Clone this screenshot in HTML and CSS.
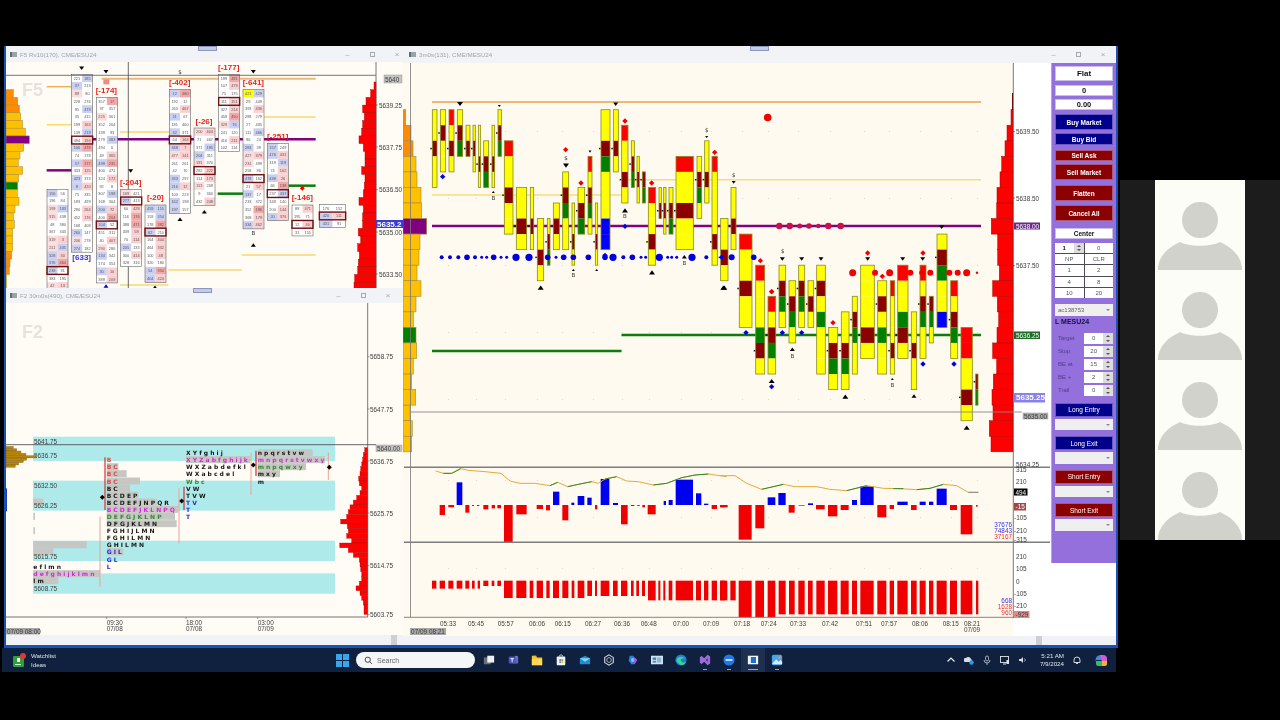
FILE: index.html
```html
<!DOCTYPE html>
<html lang="en">
<head>
<meta charset="utf-8">
<title>Trading charts</title>
<link rel="stylesheet" href="styles.css">
</head>
<body>
<div class="screen">
  <div class="desktop">
    <div class="wins">
      <section class="win win-f5">
        <header class="title"><i class="app"></i><span>F5 Rv10(170), CME/ESU24</span><b class="grip"></b><em class="ctl">&#8211;</em><em class="ctl box"></em><em class="ctl">&#215;</em></header>
        <svg id="f5" class="chart" viewBox="6 62 397 226"></svg>
      </section>
      <section class="win win-f2">
        <header class="title"><i class="app"></i><span>F2 30m0s(490), CME/ESU24</span><b class="grip"></b><em class="ctl">&#8211;</em><em class="ctl box"></em><em class="ctl">&#215;</em></header>
        <svg id="f2" class="chart" viewBox="6 303 397 332"></svg>
        <div class="scroll"><u></u></div>
      </section>
      <section class="win win-main">
        <header class="title"><i class="app"></i><span>3m0s(131), CME/MESU24</span><b class="grip"></b><em class="ctl">&#8211;</em><em class="ctl box"></em><em class="ctl">&#215;</em></header>
        <div class="main-body">
          <svg id="main" class="chart" viewBox="403 63 648 573"></svg>
          <div class="side">
            <aside class="panel">
              <div class="b wh h15 lg">Flat</div>
              <div class="b wh h11 m4 md">0</div>
              <div class="b wh h11 m3 md">0.00</div>
              <div class="b navy h16 m4">Buy Market</div>
              <div class="b navy h12 m3">Buy Bid</div>
              <div class="b maroon h11 m5">Sell Ask</div>
              <div class="b maroon h16 m3">Sell Market</div>
              <div class="b maroon h16 m5">Flatten</div>
              <div class="b maroon h16 m4">Cancel All</div>
              <div class="b wh h11 m7">Center</div>
              <div class="qty m4">
                <div class="q q1">1<s class="spin"></s></div><div class="q">0</div>
                <div class="q">NP</div><div class="q">CLR</div>
                <div class="q">1</div><div class="q">2</div>
                <div class="q">4</div><div class="q">8</div>
                <div class="q">10</div><div class="q">20</div>
              </div>
              <div class="sel m6">ac138753</div>
              <div class="sym">L MESU24</div>
              <div class="params">
                <div class="prm"><label>Target</label><span>0</span><s class="spin"></s></div>
                <div class="prm"><label>Stop</label><span>20</span><s class="spin"></s></div>
                <div class="prm"><label>BE at</label><span>15</span><s class="spin"></s></div>
                <div class="prm"><label>BE +</label><span>2</span><s class="spin"></s></div>
                <div class="prm"><label>Trail</label><span>0</span><s class="spin"></s></div>
              </div>
              <div class="n navy m7">Long Entry</div><div class="sel m2"></div>
              <div class="n navy m6">Long Exit</div><div class="sel m2"></div>
              <div class="n maroon m6">Short Entry</div><div class="sel m2"></div>
              <div class="n maroon m6">Short Exit</div><div class="sel m2"></div>
            </aside>
          </div>
        </div>
        <div class="scroll main-scroll"><u></u></div>
      </section>
    </div>
    <footer class="taskbar">
      <div class="watch">
        <svg class="wicon" viewBox="0 0 14 14"><rect y="3" width="11" height="11" rx="1" fill="#2e9e3a"/><path d="M4 5h3v4H4z" fill="#fff"/><rect x="2" y="11" width="6" height="1" fill="#cfc"/><circle cx="10" cy="3" r="3" fill="#d93a32"/></svg>
        <div class="wtext"><span>Watchlist</span><span>Ideas</span></div>
      </div>
      <div class="tb-ic start"><svg viewBox="0 0 14 14"><path fill="#35a7ee" d="M0 0h6.500v6.500H0zM7.500 0H14v6.500H7.500zM0 7.500h6.500V14H0zM7.500 7.500H14V14H7.500z"/></svg></div>
      <div class="search"><svg viewBox="0 0 12 12"><circle cx="5" cy="5" r="3.500" fill="none" stroke="#333" stroke-width="1.200"/><path d="M7.500 7.500l3 3" stroke="#333" stroke-width="1.200"/></svg><span>Search</span></div>
      <div class="tb-ic"><svg viewBox="0 0 14 14"><rect x="1" y="4" width="8" height="8" fill="#6b7077"/><rect x="5" y="2" width="8" height="8" fill="#eef0f2"/></svg></div>
      <div class="tb-ic"><svg viewBox="0 0 14 14"><circle cx="11" cy="4" r="2" fill="#7b83d6"/><rect x="6" y="4" width="7" height="7" rx="1" fill="#6269c4"/><rect x="2" y="3" width="8" height="8" rx="1" fill="#4b53bc"/><path d="M4 5h4v1H6.500v3.500h-1V6H4z" fill="#fff"/></svg></div>
      <div class="tb-ic"><svg viewBox="0 0 14 14"><path d="M1 2h5l1 2h6v9H1z" fill="#f6c62f"/><rect x="1" y="6" width="12" height="7" fill="#ffd95a"/><rect x="3" y="2" width="3" height="1" fill="#e5a50f"/></svg></div>
      <div class="tb-ic"><svg viewBox="0 0 14 14"><rect x="2" y="3" width="10" height="10" rx="1" fill="#eef3f8"/><path d="M5 3a2 2 0 0 1 4 0" fill="none" stroke="#cde"/><rect x="5" y="6" width="2" height="2" fill="#e44"/><rect x="7.500" y="6" width="2" height="2" fill="#4b4"/><rect x="5" y="8.500" width="2" height="2" fill="#39e"/><rect x="7.500" y="8.500" width="2" height="2" fill="#fb0"/></svg></div>
      <div class="tb-ic"><svg viewBox="0 0 14 14"><path d="M1 5l6-3 6 3v7H1z" fill="#1a8fd1"/><path d="M1 5l6 4 6-4" fill="#8fd6f4"/></svg></div>
      <div class="tb-ic"><svg viewBox="0 0 14 14"><path d="M7 1l5 3v6l-5 3-5-3V4z" fill="none" stroke="#dfe4ea" stroke-width="1.200"/><path d="M7 4l2.500 1.500v3L7 10 4.500 8.500v-3z" fill="none" stroke="#dfe4ea" stroke-width=".8"/></svg></div>
      <div class="tb-ic"><svg viewBox="0 0 14 14"><path d="M3 2h4l4 4-2 6H5L2 8z" fill="#2b7de0"/><path d="M9 4l3 3-3 5-2-5z" fill="#9a5be0"/><path d="M5 5h3v4H5z" fill="#7ad3f4"/></svg></div>
      <div class="tb-ic"><svg viewBox="0 0 14 14"><rect x="0" y="2" width="14" height="10" fill="#cfe4f3"/><rect x="2" y="4" width="4" height="3" fill="#3c87c9"/><rect x="7" y="4" width="5" height="6" fill="#8fb8d8"/><rect x="2" y="8" width="4" height="2" fill="#5d7fa3"/></svg></div>
      <div class="tb-ic"><svg viewBox="0 0 14 14"><circle cx="7" cy="7" r="6.500" fill="#1b7fce"/><path d="M2 9a5 4 0 0 1 10-3c-2-2-6-1-5 2 1 3 5 2 6 1-1 3-4 4.500-7 3.500" fill="#3ccf9a"/></svg></div>
      <div class="tb-ic"><svg viewBox="0 0 14 14"><path d="M3 2l3 3 4-4 3 2v8l-3 2-4-4-3 3-2-2V4z" fill="#9d6ad9"/><path d="M10 5v4L8 7z" fill="#1c2a4a"/></svg><i class="dash"></i></div>
      <div class="tb-ic"><svg viewBox="0 0 14 14"><circle cx="7" cy="7" r="6.500" fill="#1f78e8"/><rect x="3" y="6" width="8" height="2" fill="#dbe9ff"/></svg><i class="dash"></i></div>
      <div class="tb-ic active"><svg viewBox="0 0 14 14"><rect x="1" y="2" width="12" height="10" fill="#f2f4f7"/><rect x="4.500" y="3.500" width="6" height="7" fill="#1673d6"/></svg><i class="dash on"></i></div>
      <div class="tb-ic"><svg viewBox="0 0 14 14"><rect x="1" y="1" width="12" height="12" rx="2" fill="#4aa3e8"/><path d="M1 12l5-6 3 3 2-2 2 2v3H1z" fill="#d9ecfb"/><circle cx="10" cy="4" r="1.500" fill="#f28a5a"/></svg><i class="dash"></i></div>
      <div class="tray">
        <svg class="t-i" viewBox="0 0 10 10"><path d="M1.500 6.500L5 3l3.500 3.500" fill="none" stroke="#e8ecf2" stroke-width="1.200"/></svg>
        <svg class="t-i" viewBox="0 0 10 10"><path d="M1 7a2 2 0 0 1 1-4 3 3 0 0 1 5 1 2 2 0 0 1 0 3z" fill="#d7dde5"/><circle cx="7.500" cy="7.500" r="2.200" fill="#2b9de8"/></svg>
        <svg class="t-i" viewBox="0 0 10 10"><rect x="3.500" y="1" width="3" height="5" rx="1.500" fill="none" stroke="#c8ced6" stroke-width=".8"/><path d="M2 5a3 3 0 0 0 6 0M5 8v2" fill="none" stroke="#c8ced6" stroke-width=".8"/></svg>
        <svg class="t-i" viewBox="0 0 10 10"><rect x=".5" y="1.500" width="8" height="6" fill="none" stroke="#dfe4ea" stroke-width=".9"/><path d="M3 9h3" stroke="#dfe4ea"/><rect x="6.500" y="5" width="2.500" height="4" fill="#dfe4ea"/></svg>
        <svg class="t-i sp" viewBox="0 0 10 10"><path d="M1 4h2l2-2v6L3 6H1z" fill="#d7dde5"/><path d="M6.500 3.500a2 2 0 0 1 0 3" fill="none" stroke="#d7dde5" stroke-width=".7"/></svg>
        <div class="clock"><span>5:21 AM</span><span>7/9/2024</span></div>
        <svg class="t-i" viewBox="0 0 10 10"><path d="M2 7.500V5a3 3 0 0 1 6 0v2.500zM4 8.500h2" fill="none" stroke="#e4e8ee" stroke-width=".9"/></svg>
        <svg class="t-l" viewBox="0 0 14 14"><path d="M2 9a5 5 0 0 1 5-7h2v5H2z" fill="#3f8ae0"/><path d="M6 2h3a4 4 0 0 1 4 4v3H8z" fill="#d85ad0"/><path d="M2 8h6v5H4a2 2 0 0 1-2-2z" fill="#39b86c"/><path d="M8 8h5v3a2 2 0 0 1-2 2H8z" fill="#f0b429"/></svg>
      </div>
    </footer>
  </div>
  <div class="people">
    <div class="cards">
      <svg class="person" viewBox="0 0 90 90"><circle cx="45" cy="40" r="18"/><path d="M3 90C3 77 12 68 25 62c10 5 30 5 40 0 13 6 22 15 22 28z"/></svg>
      <svg class="person" viewBox="0 0 90 90"><circle cx="45" cy="40" r="18"/><path d="M3 90C3 77 12 68 25 62c10 5 30 5 40 0 13 6 22 15 22 28z"/></svg>
      <svg class="person" viewBox="0 0 90 90"><circle cx="45" cy="40" r="18"/><path d="M3 90C3 77 12 68 25 62c10 5 30 5 40 0 13 6 22 15 22 28z"/></svg>
      <svg class="person" viewBox="0 0 90 90"><circle cx="45" cy="40" r="18"/><path d="M3 90C3 77 12 68 25 62c10 5 30 5 40 0 13 6 22 15 22 28z"/></svg>
    </div>
  </div>
</div>
<script src="app.js"></script>
</body>
</html>
```
FILE: styles.css
```css
* { box-sizing: border-box; }
html, body { margin: 0; padding: 0; background: #000; overflow: hidden; }
body { font-family: "Liberation Sans", Arial, sans-serif; }
.screen { display: flex; width: 1280px; height: 720px; background: #000; filter: blur(.45px); }
.desktop { width: 1120px; padding-top: 46px; flex: none; }
.wins { position: relative; margin-left: 4px; width: 1114px; height: 602px; background: #1653b4; }
.win { position: absolute; display: flex; flex-direction: column; background: #fffcf6; overflow: hidden; }
.win-f5 { left: 2px; top: 0; width: 397px; height: 242px; }
.win-f2 { left: 2px; top: 242px; width: 397px; height: 357px; }
.win-main { left: 399px; top: 0; width: 713px; height: 599px; background: #fff; }
.title { position: relative; display: flex; align-items: center; height: 16px; flex: none; background: #f1f3f6; padding-left: 4px; color: #a0a4aa; font-size: 6.200px; }
.win-f2 .title { height: 15px; padding-right: 9px; }
.win-main .title { height: 17px; padding-left: 6px; padding-right: 7px; }
.app { width: 7px; height: 5px; margin-right: 3px; background: #9aa4a6; border-left: 2px solid #5a7072; }
.grip { position: absolute; left: 192px; top: 0; width: 19px; height: 5px; background: #c5cbe3; border: 1px solid #8d96bd; }
.win-f2 .grip { left: 187px; }
.win-main .grip { left: 347px; }
.ctl { width: 12px; text-align: center; font-style: normal; font-size: 8px; color: #a6aab0; }
.title span { flex: 1; }
.box { position: relative; height: 5px; width: 5px; margin: 0 16.500px 0 16px; border: .7px solid #a6aab0; }
.chart { display: block; flex: none; }
#f5 { width: 397px; height: 226px; background: #fffcf6; }
#f2 { width: 397px; height: 332px; background: #fffcf6; }
#main { width: 648px; height: 573px; background: #fff; }
.main-body { display: flex; height: 573px; flex: none; }
.side { width: 65px; background: #fff; }
.panel { display: flex; flex-direction: column; height: 500px; padding: 3px 3px 0 3px; background: #9370db; border-left: 1px solid #b6a3e6; font-size: 6.500px; }
.scroll { position: relative; height: 10px; background: #f0f2f5; flex: none; }
.scroll u { position: absolute; right: 6px; top: 0; width: 6px; height: 10px; background: #ccd0d4; }
.main-scroll u { right: 74px; }
.b { display: flex; align-items: center; justify-content: center; font-weight: 700; flex: none; }
.n { display: flex; align-items: center; justify-content: center; height: 14px; flex: none; }
.lg { font-size: 8px; }
.md { font-size: 7.500px; }
.wh { background: #fff; color: #111; border: 1px solid #c9bdea; }
.navy { background: #00008b; color: #fff; border: 1px solid #6a5ac0; }
.maroon { background: #8b0000; color: #fff; border: 1px solid #a8587c; }
.h11 { height: 11px; } .h12 { height: 12px; } .h15 { height: 15px; } .h16 { height: 16px; }
.m2 { margin-top: 2px; } .m3 { margin-top: 3px; } .m4 { margin-top: 4px; } .m5 { margin-top: 5px; } .m6 { margin-top: 6px; } .m7 { margin-top: 7px; }
.qty { display: grid; grid-template-columns: 1fr 1fr; gap: 1px; background: #4c4a58; flex: none; height: 55px; color: #555; }
.q { position: relative; display: flex; align-items: center; justify-content: center; background: #fff; font-size: 6px; }
.q1 { color: #111; font-weight: 700; padding-right: 10px; }
.q1 .spin { position: absolute; right: 0; top: 0; bottom: 0; height: auto; }
.spin { position: relative; display: block; width: 10px; height: 11px; background: #dcdcdc; flex: none; }
.spin::before, .spin::after { content: ""; position: absolute; left: 3px; border-left: 2px solid transparent; border-right: 2px solid transparent; }
.spin::before { top: 2px; border-bottom: 2px solid #555; }
.spin::after { bottom: 2px; border-top: 2px solid #555; }
.sel { position: relative; display: flex; align-items: center; height: 11.500px; flex: none; padding-left: 3px; background: #efefef; color: #666; font-size: 6px; }
.sel::after { content: ""; position: absolute; right: 3px; top: 5px; border-left: 2px solid transparent; border-right: 2px solid transparent; border-top: 2px solid #888; }
.sym { margin-top: 1px; height: 10px; line-height: 10px; font-weight: 700; font-size: 7px; color: #11114a; flex: none; }
.params { display: flex; flex-direction: column; gap: 2px; margin-top: 6px; flex: none; }
.prm { display: flex; height: 11px; align-items: center; }
.prm label { width: 30px; padding-left: 3px; color: #4f3f8a; font-size: 6px; }
.prm span { width: 19px; height: 11px; line-height: 11px; text-align: center; background: #fff; color: #555; font-size: 6px; }
.taskbar { display: flex; align-items: center; height: 24px; margin-left: 2px; width: 1114px; background: #10203f; color: #dfe5ee; }
.watch { display: flex; align-items: center; width: 328px; padding-left: 11px; }
.wicon { width: 14px; height: 14px; margin-right: 4px; }
.wtext { display: flex; flex-direction: column; font-size: 6.200px; line-height: 9px; }
.tb-ic { position: relative; display: flex; align-items: center; justify-content: center; width: 24px; height: 24px; flex: none; }
.tb-ic svg { width: 12px; height: 12px; }
.start { margin-right: 2px; }
.start svg { width: 13px; height: 13px; }
.search { display: flex; align-items: center; gap: 4px; width: 119px; height: 16px; margin-right: 2px; padding-left: 8px; border-radius: 8px; background: #f5f6f8; color: #666; font-size: 7px; flex: none; }
.search svg { width: 9px; height: 9px; }
.active { background: #1f2f50; }
.dash { position: absolute; bottom: 2px; left: 10px; width: 4px; height: 1px; background: #9aa3b2; }
.dash.on { left: 7px; width: 10px; background: #6db5f0; }
.tray { display: flex; align-items: center; margin-left: auto; padding-right: 8px; gap: 8px; }
.t-i { width: 10px; height: 10px; flex: none; }
.t-l { width: 14px; height: 14px; margin-left: 4px; flex: none; }
.sp { margin-right: 4px; }
.clock { display: flex; flex-direction: column; align-items: flex-end; font-size: 6.200px; line-height: 8px; color: #dfe5ee; }
.people { width: 160px; height: 360px; margin-top: 180px; background: #1c1c1c; display: flex; justify-content: center; flex: none; }
.cards { display: flex; flex-direction: column; width: 90px; background: #fdfdf7; }
.person { display: block; width: 90px; height: 90px; fill: #d2d2cc; }
text { dominant-baseline: central; font-family: "Liberation Sans", Arial, sans-serif; }
.ax { font-size: 6.400px; fill: #3c3c3c; }
.fp { font-size: 3.900px; fill: #5a5a5a; }
.lab { font-size: 8px; font-weight: 700; fill: #e8201c; }
.wm { font-size: 18px; font-weight: 700; fill: #e6e3dd; }
.tpo { font-family: "DejaVu Sans", sans-serif; font-size: 6px; font-weight: 700; }
.big { font-size: 8px; font-weight: 700; }
.sig { font-family: "DejaVu Sans", sans-serif; font-size: 5.500px; fill: #333; }
.w { fill: #fff; }
.cb { fill: #3232e0; }
.cr { fill: #f03030; }
```
FILE: app.js
```js
var R=function(x,y,w,h,f,s,sw){return '<rect x="'+x+'" y="'+y+'" width="'+w+'" height="'+h+'" fill="'+f+'"'+(s?' stroke="'+s+'" stroke-width="'+(sw||.7)+'"':'')+'/>';};
var L=function(a,b,c,d,col,w){return '<line x1="'+a+'" y1="'+b+'" x2="'+c+'" y2="'+d+'" stroke="'+col+'" stroke-width="'+(w||1)+'"/>';};
var T=function(x,y,t,cl,anc,fill){return '<text x="'+x+'" y="'+y+'" class="'+cl+'"'+(anc?' text-anchor="'+anc+'"':'')+(fill?' fill="'+fill+'"':'')+'>'+t+'</text>';};
var C=function(x,y,r,f){return '<circle cx="'+x+'" cy="'+y+'" r="'+r+'" fill="'+f+'"/>';};
var P=function(p,f){return '<polygon points="'+p+'" fill="'+f+'"/>';};
var Up=function(x,y,s,f){return P((x-s)+','+(y+s*.7)+' '+(x+s)+','+(y+s*.7)+' '+x+','+(y-s*.7),f||'#000');};
var Dn=function(x,y,s,f){return P((x-s)+','+(y-s*.7)+' '+(x+s)+','+(y-s*.7)+' '+x+','+(y+s*.7),f||'#000');};
var D=function(x,y,s,f){return P((x-s)+','+y+' '+x+','+(y-s)+' '+(x+s)+','+y+' '+x+','+(y+s),f);};
var Poly=function(pts,col,w){return '<polyline points="'+pts.join(' ')+'" fill="none" stroke="'+col+'" stroke-width="'+(w||1)+'"/>';};
var rnd=(function(){var s=12345;return function(n){s=(s*1103515245+12345)&0x7fffffff;return (s>>8)%n;};})();

/* ---------- main chart ---------- */
(function(){
  var o='',ry=function(n){return 109.7+15.55*n;};
  var X=function(z){return 405+z/3;},X2=function(z){return 720+z/3;},Y9=function(z){return 455+z/3;};
  o+=R(403,63,610,573,'#fffaf0');
  var dx=[448,476,505,537,562,593,622,649,681,711,742,768,798,830,864,889,920,951,977];
  [131,198,265,332,399,480,517,568].forEach(function(y){dx.forEach(function(x){o+=R(x,y,1,1,'#ded9cc');});});
  var gold='#ffc000',or='#ff8c00';
  var lp=[405.7,411,413,416,417,421,421.7,426.7,420,419,417,421,416,413.3,416,416.7,413.3,411.7,415.7,410,412.3,411.7];
  lp.forEach(function(r,n){var c=n<3?or:gold;if(n==7)c='#800080';if(n==14)c='#008000';o+=R(403,ry(n),r-403,15.55,c,'#a58a3a',.6);});
  var rp=[1011,1007,1005,1001.7,1000,997,996.7,991.3,997.7,997.7,999.3,992.7,997.3,998.7,997,992.7,996.7,993.3,992,993,989.3,991];
  rp.forEach(function(l,n){o+=R(l,ry(n),1013-l,15.55,'#ff0000','#b00000',.5);});
  o+=R(1012,93,1,17,'#600');
  o+=L(432,102,981,102,'#f0b878',2);
  o+=L(432,195,621.5,195,'#f8dc80',1.5)+L(621.5,179.7,981,179.7,'#f8dc80',1.5);
  o+=L(432,226,981,226,'#800080',2.5);
  o+=L(432,351,621.5,351,'#0b7d0b',2.5)+L(621.5,335,981,335,'#0b7d0b',2.5);
  var cs=[[82,96,0,'yydyy'],[106,122,0,'ydyy'],[132,147,0,'rydy'],[157,173,0,'ydg'],[183,195,1,'yd'],[204,211,1,'ydy'],[220,227,1,'yydy'],[236,251,2,'ydg'],[261,269,1,'yydy'],[279,289,0,'ydg'],[298,324,2,'ryydyy'],[334,365,5,'yydy'],[376,386,5,'yydy'],[397,416,7,'yydy'],[427,435,7,'ydg'],[445,463,6,'ydy'],[473,491,4,'ydgyy'],[501,509,6,'yydy'],[519,539,5,'ydg'],[549,561,3,'rydgy'],[571,578,6,'yydy'],[588,615,0,'yydgyyybb'],[625,640,0,'yydy'],[650,669,1,'ryydy'],[679,688,2,'ydg'],[696,703,3,'ydy'],[712,721,4,'dg'],[730,752,5,'ryydy'],[762,769,5,'yd'],[776,783,5,'ydy'],[792,804,5,'ydg'],[813,865,3,'ryydyy'],[876,890,3,'ydgy'],[899,912,2,'yydy'],[921,937,3,'ryyyydy'],[947,969,7,'yydy']].map(function(c){return [X(c[0]),X(c[1]),c[2],c[3]];});
  cs=cs.concat([[731,736,5,'yydy'],[739.3,752,8,'ryydyy'],[755.7,764.7,10,'ryyygdy'],[768,775.7,12,'rydgy'],[779,785.7,10,'ydgy'],[789,795.7,11,'ydgy'],[798.7,804.7,10,'ydgy'],[808,813.7,11,'ydy'],[816.7,825.3,10,'ydygyyy'],[828.7,837.7,14,'ydgy'],[841.3,849,13,'yydgy'],[852.3,857.3,12,'ydgyy'],[860.7,874.3,10,'yyyydy'],[877.7,886.7,11,'ydygyy'],[890.3,894.7,11,'ryyydy'],[897.7,908,10,'ryygdy'],[911.3,916.7,13,'yydyy'],[920,926,10,'rydgyy'],[929.3,933.3,12,'dgy'],[937,947,8,'ydgyyb'],[950.7,957.7,11,'rydgy'],[961,972.3,14,'rryydy'],[975.7,978,17,'dg']]);
  var col={y:'#ffff00',r:'#ff0000',d:'#8b0000',g:'#008000',b:'#0000ff'};
  cs.forEach(function(c){
    var w=c[1]-c[0],s=c[3];
    for(var i=0;i<s.length;i++) o+=R(c[0],ry(c[2]+i),w,15.55,col[s[i]]);
    o+=R(c[0],ry(c[2]),w,15.55*s.length,'none','#8a8a1a',.8);
    var k=s.indexOf('d'); if(k>=0) o+=R(c[0]-2,ry(c[2]+k)+7,1.5,1.5,'#111');
  });
  [110,135,160,186,210,230,245,266,288,305,333,372,428,453,476,505,550,600,624,655,682,708,722,763,788,800,815,861,904,950].forEach(function(z){
    var big=[333,372,624,763,861].indexOf(z)>=0,mid=[186,266,428,476,505,550,600,682].indexOf(z)>=0,t=[230,245,288,305,453,708,722,788,800,815].indexOf(z)>=0;
    o+=C(X(z),257.3,big?3.6:mid?2.8:t?1.5:2,'#0000e0');
  });
  o+=C(731.7,257.3,3,'#0000e0')+C(753.7,257.3,2.8,'#0000e0');
  [[398,3.5],[465,3],[509,3.5],[571,3],[605,2.5],[631,3],[688,3],[713,3],[740,3.5],[771,1.2]].forEach(function(a){o+=C(X2(a[0]),272.7,a[1],'#f00000');});
  [[178,3.2],[209,3.2],[239,2.5],[267,2.8],[295,2.2],[325,3.2],[362,3.2]].forEach(function(a){o+=C(X2(a[0]),226,a[1],'#c8104a');});
  o+=C(767.7,117.5,3.8,'#f00000');
  [[113,350],[660,499],[600,586]].forEach(function(a){o+=D(X(a[0]),60+a[1]/3,2.7,'#0000e0');});
  [[78,158],[187,158],[245,158],[155,320],[609,252],[702,252]].forEach(function(a){o+=D(X2(a[0]),280+a[1]/3,2.7,'#0000e0');});
  [[482,269],[528,369],[660,183],[740,369],[929,277]].forEach(function(a){o+=D(X(a[0]),60+a[1]/3,2.7,'#f00000');});
  [[121,602],[155,695],[443,579],[487,649],[609,579]].forEach(function(a){o+=D(X2(a[0]),60+a[1]/3,2.7,'#f00000');});
  o+=D(X2(339),280+128/3,2.7,'#f00000')+D(X2(155),280+35/3,2.7,'#f00000');
  [[165,132,3],[283,138,1.5],[483,317,3],[555,275,1.5],[632,133,2.5],[905,231,1.5]].forEach(function(a){o+=Dn(X(a[0]),60+a[1]/3,a[2]);});
  [[41,367,2],[187,597,2.5],[245,597,2.5],[303,597,2.5],[443,597,2.5],[548,597,2.5],[608,597,2.5],[665,502,2.5]].forEach(function(a){o+=Dn(X2(a[0]),60+a[1]/3,a[2]);});
  [[407,683,3],[265,396,1.5],[505,630,1.5],[575,630,1.5],[660,451,3],[741,637,3],[838,590,2.5],[955,683,3]].forEach(function(a){o+=Up(X(a[0]),60+a[1]/3,a[2]);});
  [[13,23,3],[155,303,3],[217,208,2.5],[376,350,3],[517,297,1.5],[582,348,2.5],[740,443,3]].forEach(function(a){o+=Up(X2(a[0]),280+a[1]/3,a[2]);});
  [[265,413],[505,645],[660,468],[838,608]].forEach(function(a){o+=T(X(a[0]),60+a[1]/3,'B','sig','middle');});
  [[217,227],[517,315]].forEach(function(a){o+=T(X2(a[0]),280+a[1]/3,'B','sig','middle');});
  [[483,293],[905,209]].forEach(function(a){o+=T(X(a[0]),60+a[1]/3,'$','sig','middle');});
  [[41,344],[188,573]].forEach(function(a){o+=T(X2(a[0]),60+a[1]/3,'$','sig','middle');});
  /* indicator */
  [[155,172,82],[444,463,110],[499,508,143],[518,538,123],[547,560,128],[587,613,72],[624,639,144],[776,783,138],[791,803,135],[812,864,74],[873,889,115],[897,910,146]].forEach(function(b){o+=R(X(b[0]),Y9(b[2]),(b[1]-b[0])/3,(150-b[2])/3,'#0000f0');});
  [[104,120,180],[130,147,157],[181,193,173],[201,207,153],[216,223,153],[235,250,163],[260,270,160],[277,288,160],[297,323,262],[334,365,178],[395,414,162],[423,435,166],[472,490,196],[570,577,163],[648,668,208],[678,688,153],[697,704,153],[712,720,157],[728,752,178],[920,936,162],[946,960,157]].forEach(function(b){o+=R(X(b[0]),Y9(150),(b[1]-b[0])/3,(b[2]-150)/3,'#f00000');});
  [[143,166,127],[175,197,114],[264,279,145],[396,411,135],[421,461,94],[532,563,140],[599,617,140],[627,640,140],[650,680,101]].forEach(function(b){o+=R(X2(b[0]),Y9(b[2]),(b[1]-b[0])/3,(150-b[2])/3,'#0000f0');});
  [[0,23,157],[56,95,254],[106,133,220],[206,224,173],[236,254,152],[288,314,163],[324,352,184],[362,386,165],[472,499,187],[509,522,162],[573,590,165],[690,711,165],[722,757,238],[768,773,155]].forEach(function(b){o+=R(X2(b[0]),Y9(150),(b[1]-b[0])/3,(b[2]-150)/3,'#f00000');});
  var pl=function(a,fx){return a.map(function(p){return fx(p[0])+','+Y9(p[1]);});};
  o+=Poly(pl([[92,48],[115,55],[140,55],[167,41],[190,46],[240,50],[288,55],[315,78],[345,85],[390,85],[435,92],[458,82],[488,95],[520,88],[560,80],[580,85],[600,72],[635,65],[665,78],[700,80],[745,90],[785,85],[830,68],[870,60],[910,57],[965,65]],X),'#e8a83a');
  o+=Poly(pl([[0,62],[45,62],[80,85],[125,103],[190,88],[225,95],[290,95],[330,103],[380,107],[440,92],[490,100],[540,101],[590,104],[630,100],[670,88],[710,92],[745,112],[775,112]],X2),'#e8a83a');
  [[[115,55],[140,55],[167,41]],[[435,92],[458,82]],[[488,95],[520,88],[560,80]],[[600,72],[635,65]],[[745,90],[785,85],[830,68],[870,60],[910,57]]].forEach(function(a){o+=Poly(pl(a,X),'#2e8b2e');});
  [[[125,103],[190,88]],[[380,107],[440,92]],[[520,101],[550,101]],[[590,104],[630,100],[670,88]]].forEach(function(a){o+=Poly(pl(a,X2),'#2e8b2e');});
  o+=Poly(pl([[745,112],[775,112]],X2),'#888');
  /* lower bars */
  [[81,94,401],[104,120,401],[130,145,401],[155,172,401],[181,193,401],[201,209,401],[218,225,401],[235,250,393],[260,268,393],[277,288,393],[297,323,429],[334,364,429],[374,385,429],[395,414,429],[424,434,429],[444,462,429],[472,490,429],[500,508,429],[518,538,429],[547,561,423],[570,576,423],[587,613,423],[624,638,423],[648,667,423],[678,686,423],[694,702,423],[711,720,423],[729,752,436],[760,766,436],[775,781,436],[791,802,436],[812,864,436],[873,888,436],[897,910,436],[920,936,436],[946,960,436]].forEach(function(b){o+=R(X(b[0]),Y9(377),(b[1]-b[0])/3,(b[2]-377)/3,'#f00000');});
  [[0,22,436],[31,47,436],[56,95,487],[106,132,487],[143,166,487],[176,197,478],[207,224,478],[235,254,478],[264,278,478],[289,314,478],[324,352,478],[362,386,478],[396,411,478],[421,461,478],[472,499,478],[509,522,478],[532,563,478],[573,590,478],[599,617,478],[627,640,478],[650,680,478],[690,711,478],[722,757,478],[768,775,478]].forEach(function(b){o+=R(X2(b[0]),Y9(377),(b[1]-b[0])/3,(b[2]-377)/3,'#f00000');});
  /* frame lines */
  o+=L(410.5,63,410.5,617,'#777',.8)+L(1013.3,63,1013.3,618,'#555',.8);
  o+=L(411,412,1022,412,'#888',.9)+L(404,467.3,1050,467.3,'#7d7d7d',1.5)+L(404,542.3,1050,542.3,'#7d7d7d',1.5)+L(404,617.3,1014,617.3,'#777',.9);
  /* time axis */
  [['05:33',448],['05:45',476],['05:57',505.7],['06:06',537],['06:15',562.7],['06:27',593],['06:36',622],['06:48',648.7],['07:00',681],['07:09',711],['07:18',742],['07:24',768.7],['07:33',798],['07:42',830],['07:51',864],['07:57',889],['08:06',920],['08:15',950.7],['08:21',972]].forEach(function(a){o+=T(a[1],623.5,a[0],'ax','middle');});
  o+=T(972,629.5,'07/09','ax','middle');
  o+=R(410,628,36,7,'#a8a8a8')+T(428,631.5,'07/09 08:21','ax','middle');
  /* price axis */
  [['5639.50',131.7],['5638.50',198],['5637.50',265.7]].forEach(function(a){o+=L(1013,a[1],1015,a[1],'#555',.7)+T(1016,a[1],a[0],'ax');});
  o+=T(1016,464.3,'5634.25','ax');
  o+=R(1014,222.5,26,7,'#6b2a8a')+T(1016,226,'5638.00','ax w');
  o+=R(1014,331.5,26,7.5,'#1f6b2a')+T(1016,335.3,'5636.25','ax w');
  o+=R(1014,393,31,9.5,'#8a82e6')+T(1016,397.8,'5635.25','big w');
  o+=R(1022.7,412.7,25.5,6.6,'#a8a8a8')+T(1024,416,'5635.00','ax');
  [['315',469],['210',481],['-105',517.7],['-210',530],['-315',539],['210',556],['105',568.7],['0',581],['-105',593],['-210',605]].forEach(function(a){o+=T(a[0][0]=='-'?1014:1016,a[1],a[0],'ax');});
  o+=R(1014,488.5,13.5,7,'#000')+T(1015.5,492,'494','ax w');
  o+=R(1014,503,12,7.5,'#a04848')+T(1015.5,506.7,'-15','ax w');
  o+=R(1014,611,15.5,7,'#e28a8a')+T(1015.5,614.5,'-929','ax');
  [['37676',524,'cb'],['74843',530,'cb'],['37167',536,'cr'],['668',600,'cb'],['1628',606,'cr'],['960',612,'cr']].forEach(function(a){o+=T(1012,a[1],a[0],'ax '+a[2],'end');});
  document.getElementById('main').innerHTML=o;
})();

/* ---------- F5 footprint ---------- */
(function(){
  var o='',Xz=function(z){return z/3;},Yz=function(z){return 40+z/3;};
  var gold='#ffc000',or='#ff8c00';
  var lp=[18,40,53,58,62,68,76,88,71,60,55,68,56,53,52,57,45,40,43,38,38,38,35,30,28,20,20];
  lp.forEach(function(r,i){var c=(i<4||(i>=22&&i<25))?or:gold;if(i==7)c='#800080';if(i==13)c='#008000';o+=R(6,Yz(126+i*23.1),Xz(r)-6,7.7,c,'#a58a3a',.5);});
  var rp=[1122,1112,1098,1088,1093,1088,1085,1077,1090,1095,1095,1085,1095,1093,1090,1077,1090,1088,1088,1075,1082,1073,1078,1075,1073,1064,1062];
  rp.forEach(function(l,i){o+=R(Xz(l),Yz(126+i*23.1),376-Xz(l),7.7,'#ff0000','#a00000',.4);});
  o+=T(22,90,'F5','wm');
  var ln=function(a,b,y,c,w){o+=L(Xz(a),Yz(y),Xz(b),Yz(y),c,w);};
  ln(305,947,116,'#f0b878',2);ln(140,215,140,'#f0b060',1.5);
  ln(140,215,254,'#f8d870',1.5);ln(360,508,276,'#f8d870',1.5);ln(790,947,231,'#f8d870',1.5);ln(505,725,690,'#f8d870',1.5);ln(725,947,645,'#f8d870',1.5);ln(360,505,735,'#f8d870',1.5);
  ln(278,947,298,'#800080',2.5);ln(140,215,391,'#800080',2.5);
  ln(865,947,437,'#0b7d0b',2.5);ln(653,729,461,'#0b7d0b',2.5);
  o+=L(128.3,62,128.3,288,'#444',.8);
  var fp=function(a,b,t,bo,poc,yel){
    var x=Xz(a),w=(b-a)/3,y=Yz(t),rows=Math.round((bo-t)/23.2),h=7.733,mid=x+w/2;
    o+=R(x,y,w,rows*h,'#fff');
    for(var i=0;i<rows;i++){
      var ry=y+i*h,l=rnd(10),r=rnd(10);
      if(l<3)o+=R(x,ry,w/2,h,'#c9d0f2');else if(l==3)o+=R(x,ry,w/2,h,'#fbdcdc');
      if(r<3)o+=R(mid,ry,w/2,h,'#fbd0d0');else if(r==3)o+=R(mid,ry,w/2,h,'#c9d0f2');else if(r==4)o+=R(mid,ry,w/2,h,'#f3a8a8');
      if(yel&&i==0)o+=R(x,ry,w/2,h,'#ffff00');
      o+=T(x+w*.25,ry+h/2,rnd(500),'fp','middle')+T(x+w*.75,ry+h/2,rnd(500),'fp','middle');
    }
    o+=R(x,y,w,rows*h,'none','#666',.6);
    if(poc){var pi=Math.round((poc-t-11)/23.2);o+=R(x,y+pi*h,w,h,'none','#701010',1.4);}
  };
  fp(141,204,448,748,688);fp(215,278,103,635,298);fp(289,352,172,727,551);fp(362,425,448,680,483);fp(435,498,495,727,575);fp(508,572,149,520,298);fp(582,645,264,497,391);fp(656,719,103,337,184);fp(729,792,149,566,414,1);fp(802,865,310,543,460);fp(876,939,495,589,552);fp(958,1037,493,565,529);
  [[-174,319,151],[-402,539,128],[-177,686,83],[-641,760,128],[-26,612,244],[-251,833,290],[-204,392,428],[-20,466,473],[-146,907,473]].forEach(function(a){o+=T(Xz(a[1]),Yz(a[2]),'['+a[0]+']','lab','middle');});
  o+=T(Xz(245),Yz(653),'[633]','lab cb','middle');
  [[245,85],[318,95],[392,393],[760,95]].forEach(function(a){o+=Dn(Xz(a[0]),Yz(a[1]),2.5);});
  [[540,538],[613,515],[760,615],[465,742]].forEach(function(a){o+=Up(Xz(a[0]),Yz(a[1]),2.5);});
  o+=Up(Xz(318),Yz(738),2.5,'#0000e0');
  o+=T(Xz(540),Yz(95),'$','sig','middle')+T(Xz(760),Yz(580),'B','sig','middle');
  o+=D(Xz(907),Yz(445),2.5,'#f00000')+R(Xz(310),Yz(118),6,5,'#f08a8a');
  o+=L(6,75.3,376,75.3,'#555',.8)+L(376,62,376,288,'#555',.8);
  [['5639.25',105],['5637.75',147],['5636.50',189.7],['5635.00',232],['5633.50',274]].forEach(function(a){o+=L(376,a[1],378,a[1],'#555',.6)+T(379,a[1],a[0],'ax');});
  o+=R(384,75,18,8,'#c4c4c4','#888',.4)+T(385,79,'5640','ax');
  o+=R(376,220,27,8,'#3a3ad8')+T(377,224,'5635.2','big w');
  document.getElementById('f5').innerHTML=o;
})();

/* ---------- F2 TPO ---------- */
(function(){
  var o='',Xz=function(z){return z/3;},Yz=function(z){return 285+z/3;};
  o+=T(22,332,'F2','wm');
  [[455,528],[587,677],[767,828],[865,926]].forEach(function(b){o+=R(33,Yz(b[0]),302,(b[1]-b[0])/3,'#aeeaea');});
  var k='#151515',m='#d828d8',r='#e04848',g='#2e8b2e',b='#2828d8';
  [[100,260,779],[100,160,800],[100,130,651],[100,105,694],[100,105,737],[100,175,887],[100,300,866],
    [320,355,545],[320,380,566],[320,420,588],[320,390,609],[320,415,630],[320,470,651],[320,535,673],[320,525,694],[320,530,716],[320,370,800],
    [558,750,524],[773,938,503],[773,975,524],[773,918,545],[773,840,566]].forEach(function(a){o+=R(Xz(a[0]),Yz(a[2])-3.5,(a[1]-a[0])/3,7,'#c6c6c2');});
  [['5641.75',470],['5636.75',512],['5632.50',602],['5626.25',662],['5615.75',813],['5608.75',911]].forEach(function(a){o+=T(34,Yz(a[1]),a[0],'ax');});
  [[320,524,'B',r],[320,545,'B C',r],[320,566,'B C',r],[320,588,'B C',r],[320,609,'B C',k],[320,630,'B C D E P',k],[320,651,'B C D E F J N P Q R',k],[320,673,'B C D E F J K L N P Q',m],[320,694,'D E F G J K L N P',g],[320,716,'D F G J K L M N',k],[320,737,'F G H I J L M N',k],[320,758,'F G H I L M N',k],[320,779,'G H I L M N',k],[320,800,'G I L',b],[320,822,'G L',b],[320,844,'L',b],
   [558,503,'X Y f g h i j',k],[558,524,'X Y Z a b f g h i j k',m],[558,545,'W X Z a b d e f k l',k],[558,566,'W X a b c d e l',k],[558,588,'W b c',g],[558,609,'V W',k],[558,630,'T V W',k],[558,651,'T V',b],[558,673,'T',b],[558,694,'T',b],
   [773,503,'n p q r s t v w',k],[773,524,'m n p q r s t v w x y',m],[773,545,'m n p q w x y',g],[773,566,'m x y',k],[773,588,'m',k],
   [100,845,'e f l m n',k],[100,866,'d e f g h i j k l m n',m],[100,887,'l m',k]].forEach(function(a){o+=T(Xz(a[0]),Yz(a[1]),a[2],'tpo',null,a[3]);});
  [[315,517,675,'#d84040',1.3],[300,695,905,'#f0a090',1],[537,610,775,'#f0a090',1],[552,605,675,'#c84040',1.3],[753,503,630,'#f0a090',1],[768,497,573,'#c84040',1.3],[985,503,585,'#f0a090',1]].forEach(function(a){o+=L(Xz(a[0]),Yz(a[1]),Xz(a[0]),Yz(a[2]),a[3],a[4]);});
  [[307,637],[545,648],[760,540],[988,547]].forEach(function(a){o+=D(Xz(a[0]),Yz(a[1]),2.5,'#000');});
  [[484,22],[491,32],[498,45],[505,60],[512,90],[519,62],[526,52],[533,38],[540,28]].forEach(function(a){o+=R(6,Yz(a[0]),Xz(a[1]),2.3,'#b8860b','#6b5010',.3);});
  o+=R(6,Yz(610),1,23,'#1a3ab0');
  var rp=[1094,1090,1088,1085,1082,1080,1076,1078,1085,1080,1070,1060,1050,1045,1040,1022,1042,1045,1040,1055,1019,1045,1060,1078,1080,1082,1085,1085,1078,1068,1080,1085,1090,1092,1092];
  rp.forEach(function(l,i){o+=R(Xz(l),Yz(488+i*14.3),367.7-Xz(l),4.77,'#ff0000','#a00000',.3);});
  o+=L(6,444.7,376,444.7,'#555',.9)+L(367.7,303,367.7,617,'#555',.8)+L(6,617,368,617,'#666',.9);
  [['5658.75',356.7],['5647.75',409],['5636.75',461],['5625.75',513],['5614.75',565.7],['5603.75',614.7]].forEach(function(a){o+=L(367.7,a[1],369.5,a[1],'#555',.6)+T(370,a[1],a[0],'ax');});
  o+=R(376,445,26,6.5,'#c4c4c4','#888',.4)+T(377,448.2,'5640.00','ax');
  [['09:30','07/08',106.7],['18:00','07/08',186],['03:00','07/09',257.7]].forEach(function(a){o+=L(a[2],617,a[2],619,'#555',.6)+T(a[2],622,a[0],'ax')+T(a[2],628,a[1],'ax');});
  o+=R(6,628,34,6.5,'#a8a8a8')+T(7,631.3,'07/09 08:00','ax');
  document.getElementById('f2').innerHTML=o;
})();
```
